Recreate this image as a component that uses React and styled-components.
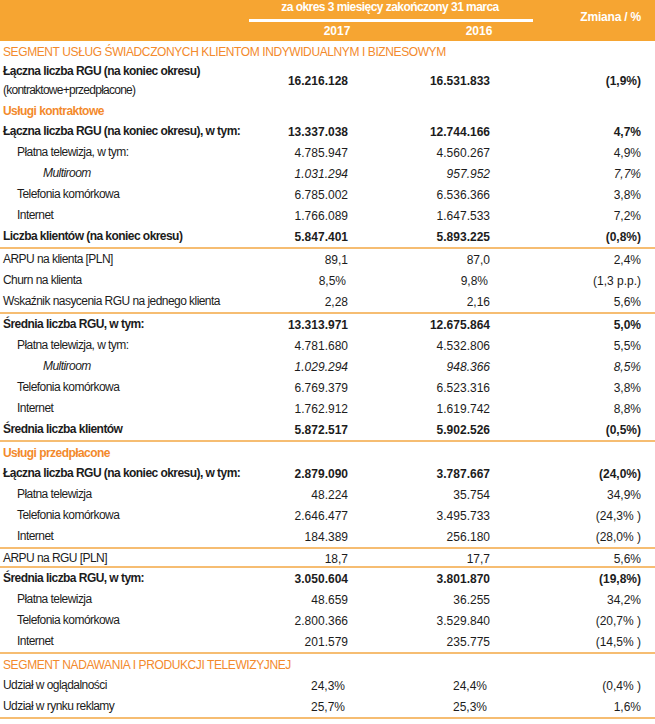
import React from 'react';
import styled, { createGlobalStyle } from 'styled-components';

const GlobalStyle = createGlobalStyle`
    body {
        margin: 0;
        background: #ffffff;
        font-family: 'Liberation Sans', Arial, sans-serif;
        color: #1c1c1c;
    }
`;

const Page = styled.div`
    width: 655px;
`;

const Header = styled.div`
    background-color: #f6a532;
    height: 41px;
    display: grid;
    grid-template-columns: 249px 284px 1fr;
    color: #ffffff;
    font-size: 12px;
    font-weight: bold;
`;

const Period = styled.div`
    grid-column: 2;
    display: flex;
    flex-direction: column;
`;

const PeriodTitle = styled.div`
    line-height: 14px;
    text-align: center;
    padding-right: 2px;
    letter-spacing: -0.55px;
`;

const WhiteLine = styled.div`
    height: 3px;
    background: #ffffff;
    margin-top: 5px;
`;

const Years = styled.div`
    display: grid;
    grid-template-columns: 176px 108px;
    line-height: 14px;
    margin-top: 2px;
    text-align: center;
`;

const ChangeHead = styled.div`
    grid-column: 3;
    text-align: right;
    padding-right: 14px;
    line-height: 34px;
    letter-spacing: -0.2px;
`;

const Row = styled.div`
    display: grid;
    grid-template-columns: 268px 80px 142px 151px;
    align-items: center;
    height: ${(p) => p.$h || 21}px;
    font-size: 12px;
    font-weight: ${(p) => (p.$bold ? 'bold' : 'normal')};
    font-style: ${(p) => (p.$italic ? 'italic' : 'normal')};
`;

const Label = styled.div`
    padding-left: ${(p) => 3 + (p.$indent || 0)}px;
    line-height: 19px;
    white-space: nowrap;
    letter-spacing: -0.55px;
`;

const SubLabel = styled.div`
    font-weight: normal;
    letter-spacing: -0.75px;
`;

const Value = styled.div`
    text-align: right;
    padding-right: ${(p) => p.$pad || 0}px;
    white-space: nowrap;
`;

const Section = styled.div`
    height: 21px;
    display: flex;
    align-items: center;
    padding-left: 3px;
    color: #f38a2c;
    font-size: 12px;
    letter-spacing: ${(p) => (p.$upper ? '-0.4px' : '-0.55px')};
    font-weight: ${(p) => (p.$bold ? 'bold' : 'normal')};
    text-transform: ${(p) => (p.$upper ? 'uppercase' : 'none')};
`;

const Separator = styled.div`
    height: 2px;
    background: #f6bd72;
`;

const groups = [
    [
        { section: 'SEGMENT USŁUG ŚWIADCZONYCH KLIENTOM INDYWIDUALNYM I BIZNESOWYM', upper: true },
        { label: ['Łączna liczba RGU (na koniec okresu)', '(kontraktowe+przedpłacone)'], v: ['16.216.128', '16.531.833', '(1,9%)'], bold: true, h: 38 },
        { section: 'Usługi kontraktowe', bold: true },
        { label: 'Łączna liczba RGU (na koniec okresu), w tym:', v: ['13.337.038', '12.744.166', '4,7%'], bold: true },
        { label: 'Płatna telewizja, w tym:', v: ['4.785.947', '4.560.267', '4,9%'], indent: 14 },
        { label: 'Multiroom', v: ['1.031.294', '957.952', '7,7%'], indent: 40, italic: true },
        { label: 'Telefonia komórkowa', v: ['6.785.002', '6.536.366', '3,8%'], indent: 14 },
        { label: 'Internet', v: ['1.766.089', '1.647.533', '7,2%'], indent: 14 },
        { label: 'Liczba klientów (na koniec okresu)', v: ['5.847.401', '5.893.225', '(0,8%)'], bold: true },
    ],
    [
        { label: 'ARPU na klienta [PLN]', v: ['89,1', '87,0', '2,4%'] },
        { label: 'Churn na klienta', v: ['8,5%', '9,8%', '(1,3 p.p.)'], pad: [2, 2, 0] },
        { label: 'Wskaźnik nasycenia RGU na jednego klienta', v: ['2,28', '2,16', '5,6%'] },
    ],
    [
        { label: 'Średnia liczba RGU, w tym:', v: ['13.313.971', '12.675.864', '5,0%'], bold: true },
        { label: 'Płatna telewizja, w tym:', v: ['4.781.680', '4.532.806', '5,5%'], indent: 14 },
        { label: 'Multiroom', v: ['1.029.294', '948.366', '8,5%'], indent: 40, italic: true },
        { label: 'Telefonia komórkowa', v: ['6.769.379', '6.523.316', '3,8%'], indent: 14 },
        { label: 'Internet', v: ['1.762.912', '1.619.742', '8,8%'], indent: 14 },
        { label: 'Średnia liczba klientów', v: ['5.872.517', '5.902.526', '(0,5%)'], bold: true },
    ],
    [
        { section: 'Usługi przedpłacone', bold: true },
        { label: 'Łączna liczba RGU (na koniec okresu), w tym:', v: ['2.879.090', '3.787.667', '(24,0%)'], bold: true },
        { label: 'Płatna telewizja', v: ['48.224', '35.754', '34,9%'], indent: 14 },
        { label: 'Telefonia komórkowa', v: ['2.646.477', '3.495.733', '(24,3% )'], indent: 14 },
        { label: 'Internet', v: ['184.389', '256.180', '(28,0% )'], indent: 14 },
    ],
    [
        { label: 'ARPU na RGU [PLN]', v: ['18,7', '17,7', '5,6%'], h: 17 },
    ],
    [
        { label: 'Średnia liczba RGU, w tym:', v: ['3.050.604', '3.801.870', '(19,8%)'], bold: true },
        { label: 'Płatna telewizja', v: ['48.659', '36.255', '34,2%'], indent: 14 },
        { label: 'Telefonia komórkowa', v: ['2.800.366', '3.529.840', '(20,7% )'], indent: 14 },
        { label: 'Internet', v: ['201.579', '235.775', '(14,5% )'], indent: 14 },
    ],
    [
        { section: 'SEGMENT NADAWANIA I PRODUKCJI TELEWIZYJNEJ', upper: true },
        { label: 'Udział w oglądalności', v: ['24,3%', '24,4%', '(0,4% )'], pad: [3, 3, 0] },
        { label: 'Udział w rynku reklamy', v: ['25,7%', '25,3%', '1,6%'], pad: [3, 3, 0] },
    ],
];

function TableRow({ row }) {
    if (row.section) {
        return (
            <Section $bold={row.bold} $upper={row.upper}>
                {row.section}
            </Section>
        );
    }
    const [main, sub] = Array.isArray(row.label) ? row.label : [row.label];
    const pad = row.pad || [0, 0, 0];
    return (
        <Row $bold={row.bold} $italic={row.italic} $h={row.h}>
            <Label $indent={row.indent}>
                <div>{main}</div>
                {sub && <SubLabel>{sub}</SubLabel>}
            </Label>
            {row.v.map((v, i) => (
                <Value key={i} $pad={pad[i]}>
                    {v}
                </Value>
            ))}
        </Row>
    );
}

function App() {
    return (
        <Page>
            <GlobalStyle />
            <Header>
                <Period>
                    <PeriodTitle>za okres 3 miesięcy zakończony 31 marca</PeriodTitle>
                    <WhiteLine />
                    <Years>
                        <div>2017</div>
                        <div>2016</div>
                    </Years>
                </Period>
                <ChangeHead>Zmiana / %</ChangeHead>
            </Header>
            {groups.map((g, gi) => (
                <React.Fragment key={gi}>
                    {g.map((row, ri) => (
                        <TableRow key={ri} row={row} />
                    ))}
                    <Separator />
                </React.Fragment>
            ))}
        </Page>
    );
}

export default App;
